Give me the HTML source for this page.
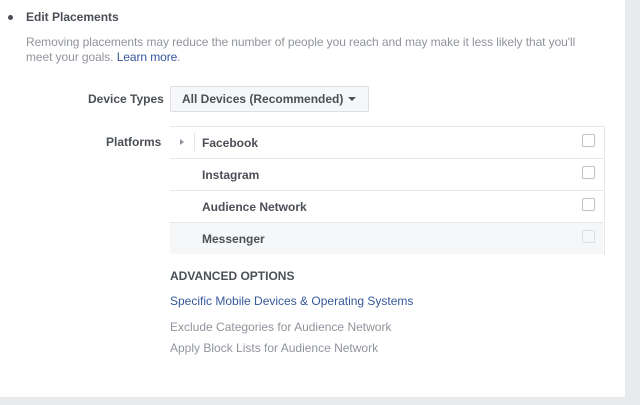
<!DOCTYPE html>
<html><head><style>
body{margin:0;width:640px;height:405px;background:#e9eaed;font-family:"Liberation Sans",Arial,sans-serif;position:relative;overflow:hidden}
.panel{position:absolute;left:0;top:0;width:625px;height:397px;background:#fff}
.a{position:absolute;white-space:nowrap}
.b{font-weight:bold;color:#4b4f56;font-size:12px}
.row{position:absolute;left:170px;width:433px;height:31px;border-top:1px solid #e5e6e9;background:#fff}
.row span{position:absolute;left:32px;top:9px;font-size:12px;font-weight:bold;color:#4b4f56}
.cb{position:absolute;left:412px;top:7px;width:11px;height:11px;border:1px solid #bec2c9;border-radius:2px;background:#fff}
</style></head><body>
<div class="panel"></div>
<div class="a" style="left:8px;top:15px;width:5px;height:5px;border-radius:50%;background:#4b4f56"></div>
<div class="a b" style="left:26px;top:10px">Edit Placements</div>
<div class="a" style="left:26px;top:35px;font-size:12px;line-height:15px;letter-spacing:-0.08px;color:#90949c">Removing placements may reduce the number of people you reach and may make it less likely that you'll<br>meet your goals. <span style="color:#365899">Learn more</span>.</div>
<div class="a b" style="left:88px;top:92px">Device Types</div>
<div class="a" style="left:170px;top:86px;width:197px;height:24px;border:1px solid #dddfe2;background:#f6f7f9;border-radius:2px"></div>
<div class="a b" style="left:182px;top:92px">All Devices (Recommended)</div>
<div class="a" style="left:348px;top:97px;border-left:4px solid transparent;border-right:4px solid transparent;border-top:4px solid #4b4f56"></div>
<div class="a b" style="left:106px;top:135px">Platforms</div>
<div class="a" style="left:170px;top:126px;width:433px;height:127px;border:1px solid #e5e6e9;border-top:none"></div>
<div class="row" style="top:126px"><span>Facebook</span><div class="cb"></div>
<div class="a" style="left:10px;top:12px;border-top:3px solid transparent;border-bottom:3px solid transparent;border-left:4px solid #90949c"></div>
<div class="a" style="left:24px;top:6px;width:1px;height:18px;background:#e5e6e9"></div></div>
<div class="row" style="top:158px"><span>Instagram</span><div class="cb"></div></div>
<div class="row" style="top:190px"><span>Audience Network</span><div class="cb"></div></div>
<div class="row" style="top:222px;background:#f6f7f9"><span>Messenger</span><div class="cb" style="border-color:#dddfe2;background:#f6f7f9"></div></div>
<div class="a" style="left:170px;top:269px;font-size:12px;font-weight:bold;color:#4b4f56">ADVANCED OPTIONS</div>
<div class="a" style="left:170px;top:294px;font-size:12px;color:#365899">Specific Mobile Devices &amp; Operating Systems</div>
<div class="a" style="left:170px;top:320px;font-size:12px;color:#90949c">Exclude Categories for Audience Network</div>
<div class="a" style="left:170px;top:341px;font-size:12px;color:#90949c">Apply Block Lists for Audience Network</div>
</body></html>
